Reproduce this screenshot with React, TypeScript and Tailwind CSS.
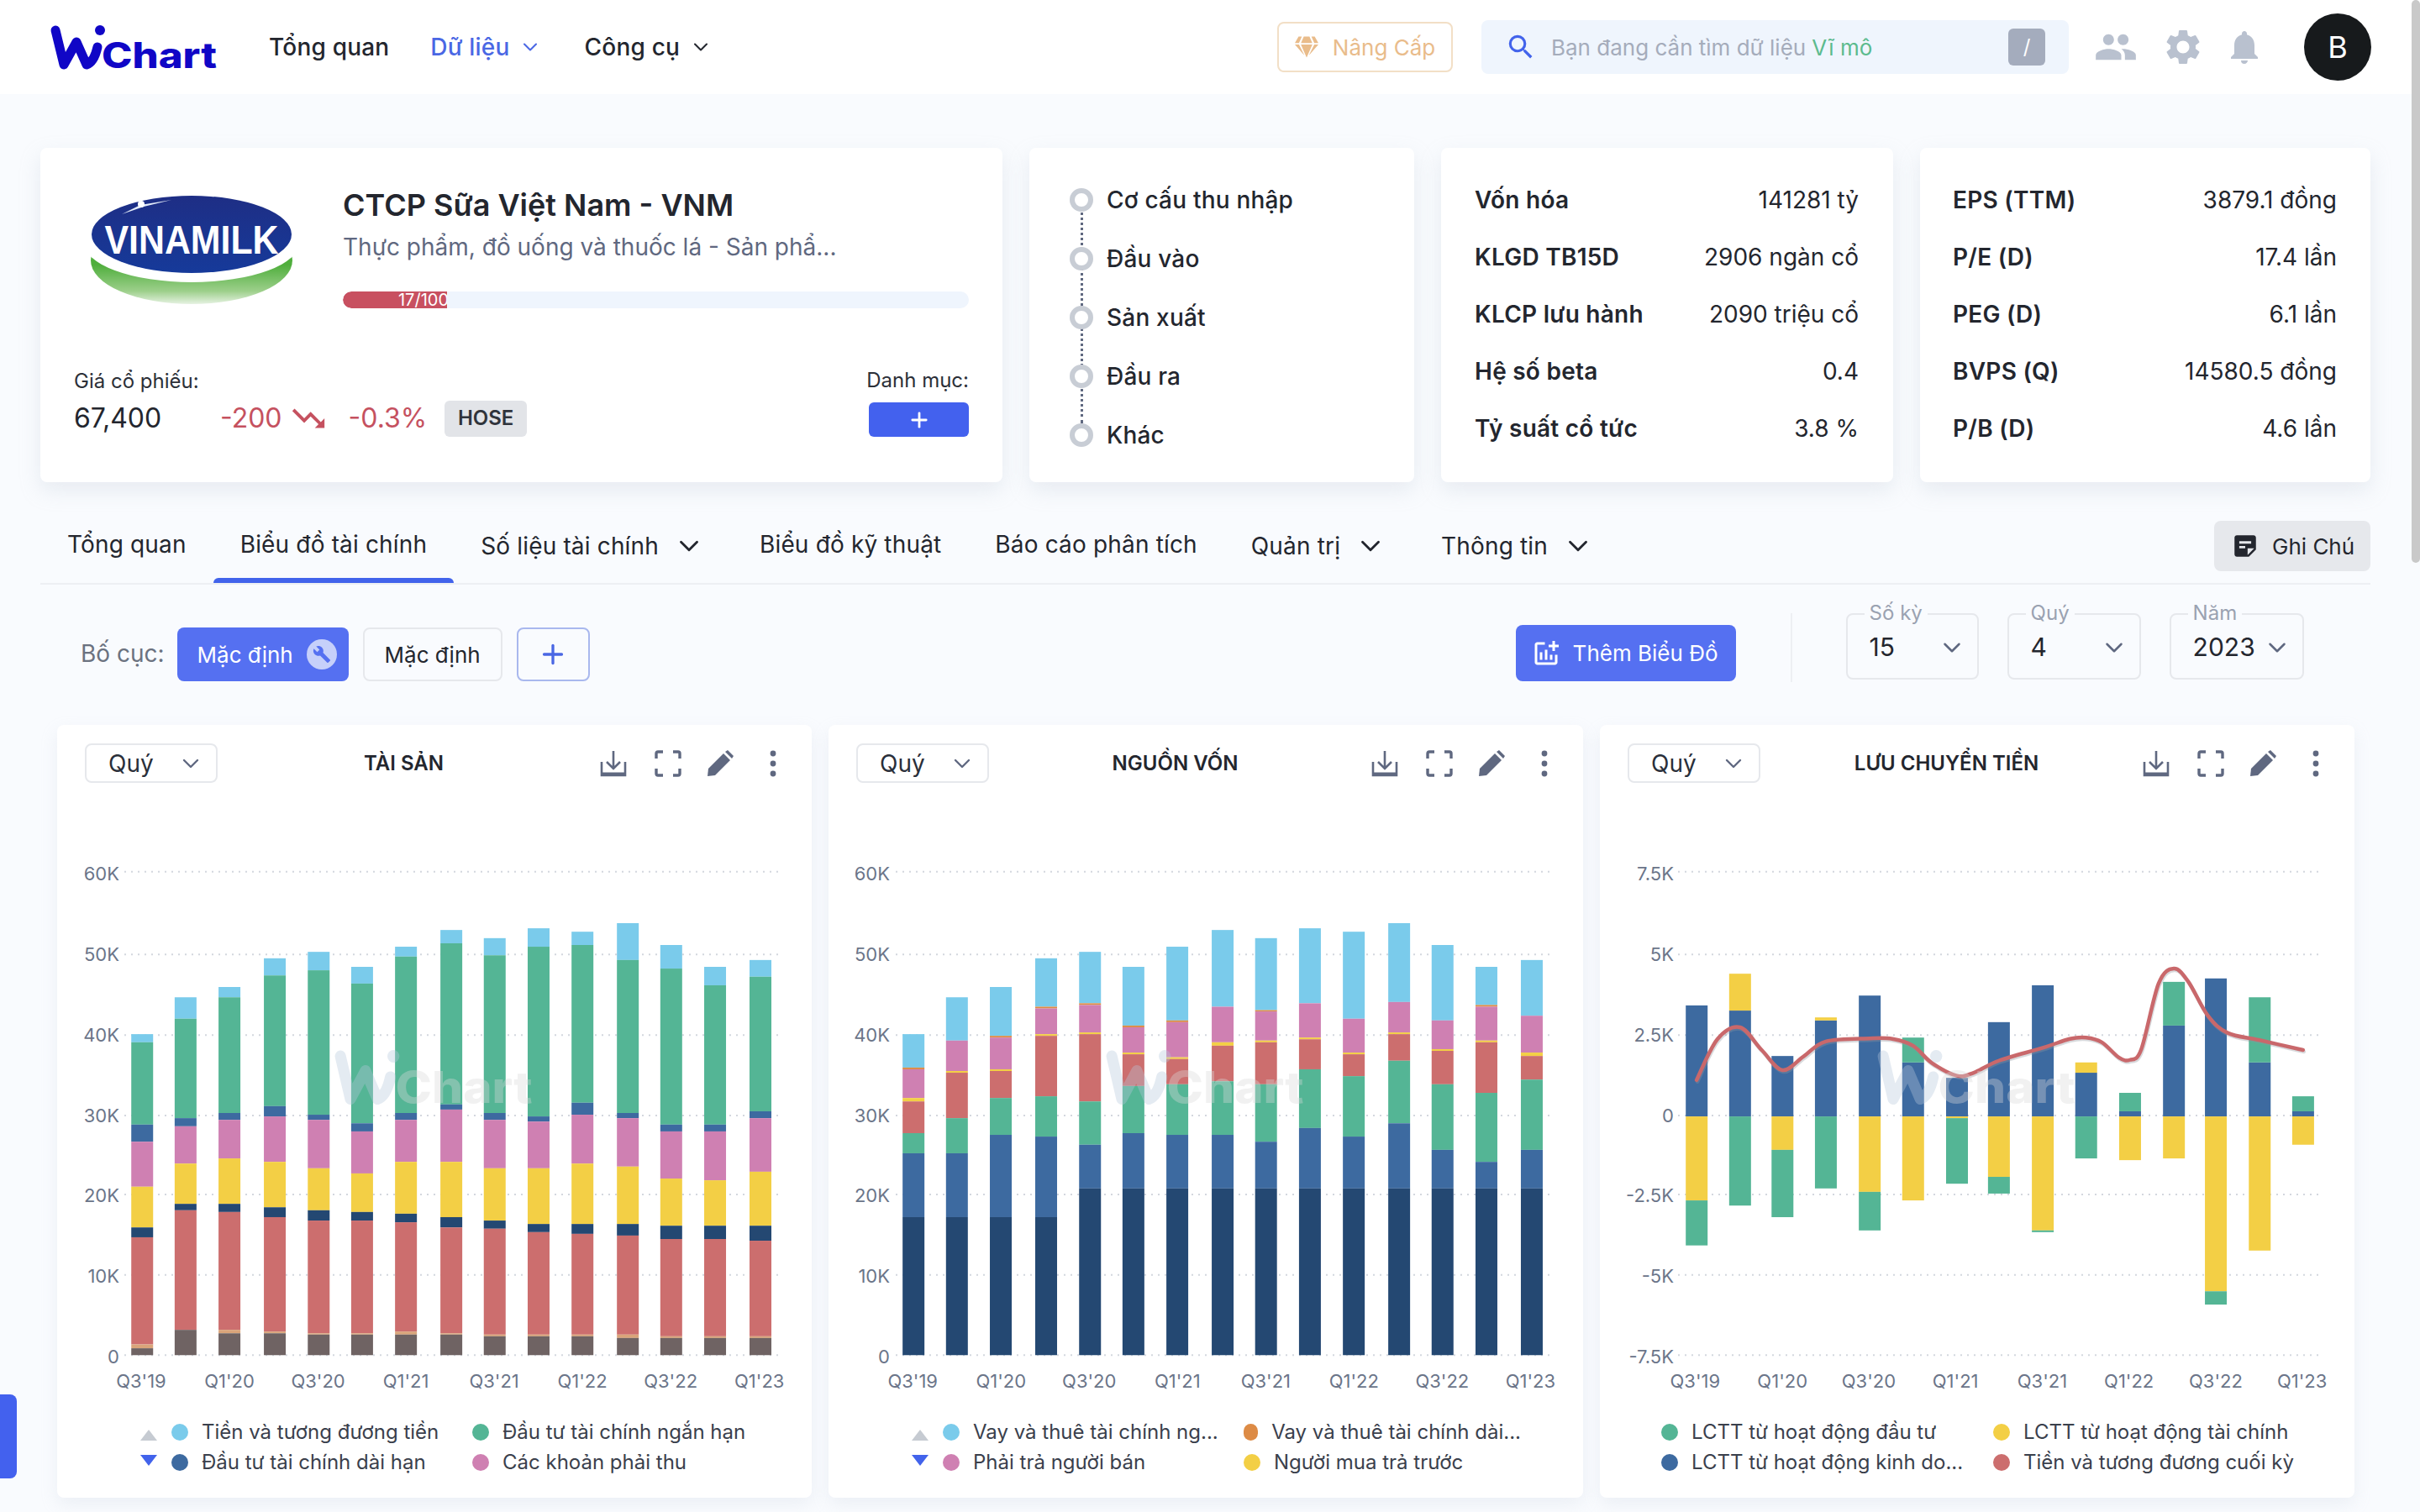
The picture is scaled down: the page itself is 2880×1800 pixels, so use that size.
import React from "react";
import { ChevronDown, Plus } from "lucide-react";
import { MdPeople, MdSettings, MdNotifications, MdBuild, MdTrendingDown, MdStickyNote2, MdOutlineAddchart, MdOutlineSearch } from "react-icons/md";
import { FaGem } from "react-icons/fa";

const SX = 1.7043;
const SY = 1.96;
const SVG_TOP = 1010;

const barXs = [164, 252, 341, 433, 522, 610, 699, 791, 879, 968, 1057, 1149, 1237, 1326, 1418];

const c1Colors = ["#7ACBEB", "#54B595", "#3D6AA0", "#CF80B2", "#F3CF45", "#244872", "#CC6E6E", "#D9A47A", "#6F6363"];
const c1 = [
  [453, 472, 664, 704, 809, 904, 927, 1177, 1186],
  [367, 417, 649, 668, 755, 849, 864, 1143, 1143],
  [343, 367, 637, 653, 743, 849, 868, 1143, 1151],
  [276, 316, 621, 645, 751, 857, 880, 1147, 1151],
  [261, 304, 641, 653, 766, 864, 888, 1151, 1154],
  [296, 335, 661, 680, 778, 868, 888, 1151, 1154],
  [249, 272, 637, 653, 751, 872, 892, 1147, 1154],
  [210, 241, 617, 629, 751, 880, 904, 1151, 1154],
  [229, 269, 637, 653, 766, 888, 907, 1154, 1158],
  [206, 249, 645, 657, 766, 896, 915, 1154, 1158],
  [214, 245, 613, 641, 755, 896, 919, 1154, 1158],
  [194, 280, 637, 649, 762, 896, 923, 1154, 1162],
  [245, 300, 664, 680, 790, 900, 931, 1158, 1162],
  [296, 339, 664, 680, 794, 900, 931, 1158, 1162],
  [280, 319, 633, 649, 774, 900, 935, 1158, 1162],
];

const c2Colors = ["#7ACBEB", "#DD8B45", "#CF80B2", "#F3CF45", "#CC6E6E", "#54B595", "#3D6AA0", "#244872"];
const c2 = [
  [453, 531, 535, 602, 610, 684, 731, 880],
  [367, 468, 468, 539, 543, 649, 731, 880],
  [343, 457, 461, 535, 539, 602, 688, 880],
  [276, 389, 393, 453, 457, 598, 692, 880],
  [261, 381, 385, 449, 453, 610, 711, 813],
  [296, 433, 437, 496, 500, 574, 684, 813],
  [249, 421, 425, 507, 511, 570, 688, 813],
  [210, 389, 389, 472, 480, 563, 688, 813],
  [229, 397, 400, 468, 472, 570, 704, 813],
  [206, 381, 381, 461, 465, 535, 672, 813],
  [214, 417, 417, 496, 500, 551, 692, 813],
  [194, 378, 378, 449, 453, 515, 661, 813],
  [245, 421, 421, 488, 492, 570, 723, 813],
  [296, 385, 389, 468, 472, 590, 751, 813],
  [280, 410, 410, 496, 504, 559, 723, 813],
];

const B = "#3D6AA0";
const G = "#54B595";
const Y = "#F3CF45";
const c3Xs = [181, 269, 355, 443, 532, 620, 709, 794, 883, 971, 1060, 1149, 1234, 1323, 1411];
type Seg = [string, number];
const c3: { pos: Seg[]; neg: Seg[] }[] = [
  { pos: [[B, 386]], neg: [[Y, 841], [G, 946]] },
  { pos: [[B, 398], [Y, 312]], neg: [[G, 853]] },
  { pos: [[B, 504]], neg: [[Y, 723], [G, 880]] },
  { pos: [[B, 421], [Y, 414]], neg: [[G, 813]] },
  { pos: [[B, 363]], neg: [[Y, 821], [G, 911]] },
  { pos: [[B, 519], [G, 461]], neg: [[Y, 841]] },
  { pos: [[B, 555]], neg: [[Y, 649], [G, 802]] },
  { pos: [[B, 425]], neg: [[Y, 786], [G, 825]] },
  { pos: [[B, 339]], neg: [[Y, 911], [G, 915]] },
  { pos: [[B, 543], [Y, 519]], neg: [[G, 743]] },
  { pos: [[B, 633], [G, 590]], neg: [[Y, 747]] },
  { pos: [[B, 433], [G, 331]], neg: [[Y, 743]] },
  { pos: [[B, 323]], neg: [[Y, 1053], [G, 1084]] },
  { pos: [[B, 519], [G, 367]], neg: [[Y, 958]] },
  { pos: [[B, 633], [G, 598]], neg: [[Y, 711]] },
];
const linePts: [number, number][] = [
  [203, 560], [245, 465], [291, 437], [335, 490], [377, 537], [420, 505], [465, 470], [554, 463], [600, 464], [642, 480],
  [680, 520], [731, 550], [765, 543], [816, 515], [905, 485], [960, 464], [993, 461], [1025, 472], [1060, 508], [1082, 513],
  [1105, 488], [1140, 335], [1171, 300], [1200, 330], [1240, 410], [1280, 450], [1345, 467], [1433, 490],
];

const gridZ = [74, 267, 455, 643, 827, 1015, 1202];
const xLabels = ["Q3'19", "Q1'20", "Q3'20", "Q1'21", "Q3'21", "Q1'22", "Q3'22", "Q1'23"];

function LogoMark({ wColor, textColor }: { wColor: string; textColor: string }) {
  return (
    <g>
      <path d="M66 36 L76 77 L91 50 L103 77 Q112 74 116 56" fill="none" stroke={wColor} strokeWidth="11" strokeLinecap="round" strokeLinejoin="round" />
      <circle cx="119" cy="36" r="6" fill={wColor} />
      <text x="121" y="81" fontSize="42" fontWeight="800" fill={textColor} textLength="137" lengthAdjust="spacingAndGlyphs">Chart</text>
    </g>
  );
}

function Chart({ kind, ox, left, labelRight, gridL, gridR, yLabels }: {
  kind: 1 | 2 | 3; ox: number; left: number; labelRight: number; gridL: number; gridR: number; yLabels: string[];
}) {
  const sx = (z: number) => ox + z / SX - left;
  const sy = (z: number) => 1000 + z / SY - SVG_TOP;
  const rects: React.ReactNode[] = [];
  const addRect = (k: string, zx: number, zt: number, zb: number, col: string) => {
    if (zb <= zt) return;
    rects.push(<rect key={k} x={sx(zx)} y={sy(zt)} width={26} height={(zb - zt) / SY} fill={col} />);
  };
  if (kind === 1 || kind === 2) {
    const data = kind === 1 ? c1 : c2;
    const cols = kind === 1 ? c1Colors : c2Colors;
    const off = kind === 1 ? 0 : -3.5;
    data.forEach((b, i) => {
      const arr = [...b, 1202];
      for (let s = 0; s < arr.length - 1; s++) addRect(`${i}-${s}`, barXs[i] + off, arr[s], arr[s + 1], cols[s]);
    });
  } else {
    c3.forEach((b, i) => {
      let cur = 645;
      b.pos.forEach(([col, top], s) => { addRect(`p${i}-${s}`, c3Xs[i], top, cur, col); cur = top; });
      cur = 645;
      b.neg.forEach(([col, bot], s) => { addRect(`n${i}-${s}`, c3Xs[i], cur, bot, col); cur = bot; });
    });
  }
  let linePath = "";
  if (kind === 3) {
    const P = linePts.map(([x, y]) => [sx(x), sy(y)]);
    linePath = `M${P[0][0]} ${P[0][1]}`;
    for (let i = 0; i < P.length - 1; i++) {
      const p0 = P[Math.max(0, i - 1)], p1 = P[i], p2 = P[i + 1], p3 = P[Math.min(P.length - 1, i + 2)];
      const c1x = p1[0] + (p2[0] - p0[0]) / 6, c1y = p1[1] + (p2[1] - p0[1]) / 6;
      const c2x = p2[0] - (p3[0] - p1[0]) / 6, c2y = p2[1] - (p3[1] - p1[1]) / 6;
      linePath += ` C${c1x} ${c1y} ${c2x} ${c2y} ${p2[0]} ${p2[1]}`;
    }
  }
  const labelCenters = kind === 1
    ? [184, 363, 543, 721, 900, 1079, 1258, 1438]
    : kind === 2
      ? [181, 360, 539, 718, 897, 1076, 1255, 1434]
      : [200, 377, 552, 728, 904, 1080, 1256, 1431];
  return (
    <svg width={898} height={650} className="block">
      {gridZ.map((z) => (
        <line key={z} x1={gridL - left} x2={gridR - left} y1={sy(z)} y2={sy(z)} stroke="#D3D7DE" strokeWidth={2} strokeDasharray="2 6" />
      ))}
      {rects}
      {kind === 3 && (
        <>
          <path d={linePath} fill="none" stroke="#8F959E" strokeOpacity={0.35} strokeWidth={4.5} transform="translate(1 2)" strokeLinecap="round" />
          <path d={linePath} fill="none" stroke="#C9686B" strokeWidth={4.5} strokeLinecap="round" />
        </>
      )}
      <g transform="translate(330 240) scale(1.19 1.24) translate(-60 -30)" opacity={0.36}>
        <LogoMark wColor="#B6C8DC" textColor="#DADADA" />
      </g>
      {yLabels.map((t, i) => (
        <text key={t} x={labelRight - left} y={sy(74 + i * 188) + 10} textAnchor="end" fontSize={22} fill="#6B7589">{t}</text>
      ))}
      {xLabels.map((t, i) => (
        <text key={t} x={sx(labelCenters[i])} y={sy(1262) + 8} textAnchor="middle" fontSize={22} fill="#6B7589">{t}</text>
      ))}
    </svg>
  );
}

function QuySelect() {
  return (
    <div className="ml-[33px] flex h-[47px] w-[158px] items-center justify-between rounded-[8px] border-2 border-[#E6E8EC] bg-white pl-[26px] pr-[14px] text-[28px] text-[#2A2F3A]">
      <span>Quý</span>
      <ChevronDown size={32} strokeWidth={1.8} className="text-[#5F6880]" />
    </div>
  );
}

function HeaderIcons() {
  const c = "#5F6880";
  return (
    <div className="flex items-center">
      <svg width="32" height="32" viewBox="0 0 32 32" fill="none" stroke={c}>
        <path d="M16 1 V21 M8 14 L16 22 L24 14" strokeWidth="2.6" />
        <path d="M2 14 V30 H30 V14" strokeWidth="2.6" />
        <path d="M2 28.5 H30" strokeWidth="4" />
      </svg>
      <svg className="ml-[33px]" width="32" height="32" viewBox="0 0 32 32" fill="none" stroke={c} strokeWidth="3.4">
        <path d="M2 10 V4 Q2 2 4 2 H10 M22 2 H28 Q30 2 30 4 V10 M30 22 V28 Q30 30 28 30 H22 M10 30 H4 Q2 30 2 28 V22" />
      </svg>
      <svg className="ml-[30px]" width="32" height="32" viewBox="0 0 32 32" fill={c}>
        <path d="M1 31 L2 22 L20 4 L28 12 L10 30 Z" />
        <path d="M22 2 L25 0 L32 7 L30 10 Z" />
      </svg>
      <svg className="ml-[31px]" width="32" height="32" viewBox="0 0 32 32" fill={c}>
        <circle cx="16" cy="4" r="3.4" /><circle cx="16" cy="16" r="3.4" /><circle cx="16" cy="28" r="3.4" />
      </svg>
    </div>
  );
}

type LegendItem = [string, string];
function Legend({ items, arrows }: { items: LegendItem[]; arrows: boolean }) {
  return (
    <div className={arrows ? "mt-[27px] flex pl-[99px]" : "mt-[27px] flex pl-[73px]"}>
      {arrows && (
        <div className="mr-[17px] flex w-[20px] flex-col">
          <div className="flex h-[36px] items-end pb-[8px]">
            <svg width="20" height="13" viewBox="0 0 20 13"><path d="M10 0 L20 13 H0 Z" fill="#C6CBD2" /></svg>
          </div>
          <div className="flex h-[36px] items-start pt-[9px]">
            <svg width="20" height="13" viewBox="0 0 20 13"><path d="M0 0 H20 L10 13 Z" fill="#4263EB" /></svg>
          </div>
        </div>
      )}
      <div className={arrows ? "grid grid-cols-[358px_330px] text-[24px] text-[#3A404C]" : "grid grid-cols-[395px_400px] text-[24px] text-[#3A404C]"}>
        {items.map(([t, col]) => (
          <div key={t} className="flex h-[36px] items-center whitespace-nowrap">
            <span className="mr-[16px] h-[20px] w-[20px] rounded-full" style={{ backgroundColor: col }} />
            {t}
          </div>
        ))}
      </div>
    </div>
  );
}

function ChartCard(props: { title: string; kind: 1 | 2 | 3; ox: number; left: number; labelRight: number; gridL: number; gridR: number; yLabels: string[]; legend: LegendItem[]; arrows: boolean }) {
  return (
    <div className="h-[920px] w-[898px] rounded-[8px] bg-white pt-[22px] shadow-[0_8px_20px_rgba(180,190,205,0.18)]">
      <div className="flex h-[47px] items-center">
        <QuySelect />
        <div className="w-[455px] pr-[12px] text-center text-[24px] font-semibold text-[#23262E]">{props.title}</div>
        <HeaderIcons />
      </div>
      <div className="mt-[78px]">
        <Chart kind={props.kind} ox={props.ox} left={props.left} labelRight={props.labelRight} gridL={props.gridL} gridR={props.gridR} yLabels={props.yLabels} />
      </div>
      <Legend items={props.legend} arrows={props.arrows} />
    </div>
  );
}

function Row({ label, value }: { label: string; value: string }) {
  return (
    <div className="flex h-[68px] items-center justify-between text-[28px] text-[#23262E]">
      <span className="font-semibold tracking-[0.25px]">{label}</span>
      <span>{value}</span>
    </div>
  );
}

function TabChevron() {
  return (
    <span className="ml-[16px] flex w-[40px] justify-center text-[#23262E]">
      <ChevronDown size={38} strokeWidth={1.8} className="shrink-0" />
    </span>
  );
}

function PeriodSelect({ label, value, w }: { label: string; value: string; w: string }) {
  return (
    <div className={`relative flex h-[79px] items-center justify-between rounded-[8px] border-2 border-[#E6E8EC] pl-[26px] pr-[13px] pt-[2px] ${w}`}>
      <span className="absolute left-[20px] top-[-18px] bg-[#F9FBFE] px-[6px] text-[24px] leading-[32px] text-[#9AA2B1]">{label}</span>
      <span className="text-[30px] text-[#23262E]">{value}</span>
      <ChevronDown size={34} strokeWidth={1.8} className="text-[#5F6880]" />
    </div>
  );
}

export default function App() {
  return (
    <div className="relative h-[1800px] w-[2880px] overflow-hidden bg-[#F9FBFE] text-[#23262E] [font-family:Inter,'Noto_Sans',sans-serif]">
      {/* Top bar */}
      <header className="flex h-[112px] items-center bg-white pl-[60px] pr-[58px]">
        <svg width="198" height="53" viewBox="60 30 198 53" className="overflow-visible">
          <LogoMark wColor="#1006C6" textColor="#1006C6" />
        </svg>
        <span className="ml-[62px] text-[28px] font-medium tracking-[0.2px] text-[#23262E]">Tổng quan</span>
        <span className="ml-[49px] text-[28px] font-medium tracking-[0.2px] text-[#4A67E4]">Dữ liệu</span>
        <ChevronDown size={28} strokeWidth={1.8} className="ml-[10px] text-[#4A67E4]" />
        <span className="ml-[51px] text-[28px] font-medium tracking-[0.2px] text-[#23262E]">Công cụ</span>
        <ChevronDown size={28} strokeWidth={1.8} className="ml-[11px] text-[#23262E]" />
        <div className="ml-auto flex h-[60px] w-[209px] items-center justify-center rounded-[8px] border-2 border-[#F2DFC6] text-[26px] text-[#E9BC8B]">
          <FaGem size={28} className="mr-[17px]" />
          Nâng Cấp
        </div>
        <div className="ml-[34px] flex h-[64px] w-[699px] items-center rounded-[8px] bg-[#EFF5FD] pl-[28px] text-[26px] text-[#A5ACBB]">
          <MdOutlineSearch size={38} className="text-[#4263EB]" />
          <span className="ml-[17px]">Bạn đang cần tìm dữ liệu</span>
          <span className="ml-[7px] text-[#5CBB8E]">Vĩ mô</span>
          <span className="ml-auto mr-[28px] flex h-[44px] w-[44px] items-center justify-center rounded-[6px] bg-[#A4ACBD] text-[24px] text-white">/</span>
        </div>
        <MdPeople size={52} className="ml-[30px] text-[#B9C1CF]" />
        <MdSettings size={50} className="ml-[29px] text-[#B9C1CF]" />
        <MdNotifications size={48} className="ml-[24px] text-[#B9C1CF]" />
        <div className="ml-[47px] flex h-[80px] w-[80px] items-center justify-center rounded-full bg-[#171A1C] text-[36px] text-white">B</div>
      </header>

      {/* Summary cards */}
      <section className="mt-[64px] flex gap-[32px] pl-[48px]">
        <div className="flex h-[398px] w-[1145px] flex-col justify-between rounded-[8px] bg-white pb-[54px] pl-[40px] pr-[40px] shadow-[0_10px_24px_rgba(180,190,205,0.25)]">
          <div className="flex pt-[56px]">
            <svg width="258" height="130" viewBox="0 0 258 130" className="ml-[11px]">
              <defs>
                <linearGradient id="vg" x1="0" y1="0" x2="0" y2="1">
                  <stop offset="0.55" stopColor="#4FAE3C" />
                  <stop offset="0.85" stopColor="#9CCF8A" />
                  <stop offset="1" stopColor="#E6F2E2" />
                </linearGradient>
                <linearGradient id="vb" x1="0" y1="0" x2="0" y2="1">
                  <stop offset="0" stopColor="#1E2E85" />
                  <stop offset="1" stopColor="#163A9A" />
                </linearGradient>
              </defs>
              <ellipse cx="129" cy="78" rx="120" ry="52" fill="url(#vg)" />
              <ellipse cx="129" cy="56" rx="129" ry="48" fill="#FFFFFF" />
              <ellipse cx="129" cy="47" rx="119" ry="46" fill="url(#vb)" />
              <path d="M46 23 L68 12 L105 6 L72 14 Z" fill="#E4ECF9" />
              <circle cx="69" cy="11" r="4" fill="#FFFFFF" />
              <text x="129" y="70" textAnchor="middle" fontSize="48" fontWeight="700" fill="#FFFFFF" textLength="207" lengthAdjust="spacingAndGlyphs" className="[font-family:'Liberation_Sans',sans-serif]">VINAMILK</text>
            </svg>
            <div className="ml-[51px] flex-1">
              <div className="mt-[-10px] text-[36px] font-semibold leading-[44px] text-[#23262E]">CTCP Sữa Việt Nam - VNM</div>
              <div className="mt-[8px] text-[28px] leading-[40px] text-[#5F6880]">Thực phẩm, đồ uống và thuốc lá - Sản phẩ...</div>
              <div className="mt-[33px] h-[20px] overflow-hidden rounded-full bg-[#EFF5FD]">
                <div className="flex h-[20px] w-[124px] justify-end overflow-hidden whitespace-nowrap rounded-l-full bg-[#C85060] text-[20px] leading-[20px] text-white">
                  <span className="mr-[-2px]">17/100</span>
                </div>
              </div>
            </div>
          </div>
          <div className="flex items-end justify-between">
            <div>
              <div className="text-[24px] leading-[32px] text-[#2C3038]">Giá cổ phiếu:</div>
              <div className="mt-[6px] flex h-[44px] items-center">
                <span className="w-[174px] text-[32px] text-[#23262E]">67,400</span>
                <span className="text-[32px] text-[#C5515F]">-200</span>
                <MdTrendingDown size={46} className="ml-[8px] text-[#C5515F]" />
                <span className="ml-[25px] text-[32px] text-[#C5515F]">-0.3%</span>
                <span className="ml-[21px] flex h-[43px] w-[98px] items-center justify-center rounded-[6px] bg-[#E2E4E8] text-[24px] font-semibold text-[#30343C]">HOSE</span>
              </div>
            </div>
            <div className="flex w-[119px] flex-col items-end">
              <div className="whitespace-nowrap text-[24px] leading-[32px] text-[#2C3038]">Danh mục:</div>
              <div className="mt-[10px] flex h-[41px] w-[119px] items-center justify-center rounded-[6px] bg-[#4361EE] text-white">
                <Plus size={28} strokeWidth={2.4} />
              </div>
            </div>
          </div>
        </div>

        <div className="relative h-[398px] w-[458px] rounded-[8px] bg-white pl-[48px] pt-[27px] shadow-[0_10px_24px_rgba(180,190,205,0.25)]">
          <div className="absolute bottom-[70px] left-[61px] top-[70px] w-0 border-l-[3px] border-dotted border-[#5F6880]" />
          {["Cơ cấu thu nhập", "Đầu vào", "Sản xuất", "Đầu ra", "Khác"].map((t) => (
            <div key={t} className="relative flex h-[70px] items-center text-[28px] font-medium tracking-[0.2px] text-[#23262E]">
              <span className="h-[28px] w-[28px] rounded-full border-[6px] border-[#C8CDD5] bg-white" />
              <span className="ml-[16px]">{t}</span>
            </div>
          ))}
        </div>

        <div className="h-[398px] w-[538px] rounded-[8px] bg-white pl-[40px] pr-[41px] pt-[28px] shadow-[0_10px_24px_rgba(180,190,205,0.25)]">
          <Row label="Vốn hóa" value="141281 tỷ" />
          <Row label="KLGD TB15D" value="2906 ngàn cổ" />
          <Row label="KLCP lưu hành" value="2090 triệu cổ" />
          <Row label="Hệ số beta" value="0.4" />
          <Row label="Tỷ suất cổ tức" value="3.8 %" />
        </div>

        <div className="h-[398px] w-[536px] rounded-[8px] bg-white pl-[39px] pr-[40px] pt-[28px] shadow-[0_10px_24px_rgba(180,190,205,0.25)]">
          <Row label="EPS (TTM)" value="3879.1 đồng" />
          <Row label="P/E (D)" value="17.4 lần" />
          <Row label="PEG (D)" value="6.1 lần" />
          <Row label="BVPS (Q)" value="14580.5 đồng" />
          <Row label="P/B (D)" value="4.6 lần" />
        </div>
      </section>

      {/* Tabs */}
      <nav className="ml-[48px] mt-[32px] flex h-[90px] w-[2773px] items-stretch border-b-2 border-[#EDEFF3] text-[28px] tracking-[0.16px] text-[#23262E]">
        <div className="flex items-center px-[32px] pb-[4px]">Tổng quan</div>
        <div className="relative flex items-center px-[32px] pb-[4px]">
          Biểu đồ tài chính
          <span className="absolute bottom-0 left-0 right-0 h-[6px] rounded-t-[6px] bg-[#4263EB]" />
        </div>
        <div className="flex items-center pl-[32px] pr-[32px]">Số liệu tài chính<TabChevron /></div>
        <div className="flex items-center px-[32px] pb-[4px]">Biểu đồ kỹ thuật</div>
        <div className="flex items-center px-[32px] pb-[4px]">Báo cáo phân tích</div>
        <div className="flex items-center px-[32px]">Quản trị<TabChevron /></div>
        <div className="flex items-center px-[32px]">Thông tin<TabChevron /></div>
        <div className="ml-auto mt-[14px] flex h-[60px] w-[186px] items-center rounded-[8px] bg-[#E6E8EC] pl-[20px]">
          <MdStickyNote2 size={34} className="text-[#23262E]" />
          <span className="ml-[15px] text-[26px] tracking-normal">Ghi Chú</span>
        </div>
      </nav>

      {/* Toolbar */}
      <section className="mt-[34px] flex h-[81px] items-start pl-[96px]">
        <span className="mt-[30px] text-[28px] leading-[36px] text-[#6B7280]">Bố cục:</span>
        <div className="ml-[15px] mt-[17px] flex h-[64px] w-[204px] items-center rounded-[8px] bg-[#5570F1] pl-[24px] text-[26px] text-white">
          Mặc định
          <span className="ml-[16px] flex h-[36px] w-[36px] items-center justify-center rounded-full bg-[#C6D0FA] text-[#5570F1]">
            <MdBuild size={22} />
          </span>
        </div>
        <div className="ml-[17px] mt-[17px] flex h-[64px] w-[166px] items-center justify-center rounded-[8px] border-2 border-[#E6E8EC] text-[26px]">Mặc định</div>
        <div className="ml-[17px] mt-[17px] flex h-[64px] w-[87px] items-center justify-center rounded-[8px] border-2 border-[#A9B8EE] text-[#4A67E4]">
          <Plus size={36} strokeWidth={2.2} />
        </div>
        <div className="ml-[1102px] mt-[14px] flex h-[67px] w-[262px] items-center rounded-[8px] bg-[#5570F1] pl-[18px] text-[26px] text-white">
          <MdOutlineAddchart size={36} />
          <span className="ml-[14px]">Thêm Biểu Đồ</span>
        </div>
        <div className="ml-[65px] h-[82px] w-[2px] bg-[#EDEFF3]" />
        <div className="ml-[64px] flex gap-[34px]">
          <PeriodSelect label="Số kỳ" value="15" w="w-[158px]" />
          <PeriodSelect label="Quý" value="4" w="w-[159px]" />
          <PeriodSelect label="Năm" value="2023" w="w-[160px]" />
        </div>
      </section>

      {/* Charts */}
      <section className="ml-[68px] mt-[52px] flex gap-[20px]">
        <ChartCard
          title="TÀI SẢN" kind={1} ox={60} left={68} labelRight={142} gridL={148} gridR={928}
          yLabels={["60K", "50K", "40K", "30K", "20K", "10K", "0"]}
          legend={[["Tiền và tương đương tiền", "#7ACBEB"], ["Đầu tư tài chính ngắn hạn", "#54B595"], ["Đầu tư tài chính dài hạn", "#3D6AA0"], ["Các khoản phải thu", "#CF80B2"]]}
          arrows
        />
        <ChartCard
          title="NGUỒN VỐN" kind={2} ox={980} left={986} labelRight={1059} gridL={1066} gridR={1847}
          yLabels={["60K", "50K", "40K", "30K", "20K", "10K", "0"]}
          legend={[["Vay và thuê tài chính ng...", "#7ACBEB"], ["Vay và thuê tài chính dài...", "#DD8B45"], ["Phải trả người bán", "#CF80B2"], ["Người mua trả trước", "#F3CF45"]]}
          arrows
        />
        <ChartCard
          title="LƯU CHUYỂN TIỀN" kind={3} ox={1900} left={1904} labelRight={1992} gridL={1997} gridR={2763}
          yLabels={["7.5K", "5K", "2.5K", "0", "-2.5K", "-5K", "-7.5K"]}
          legend={[["LCTT từ hoạt động đầu tư", "#54B595"], ["LCTT từ hoạt động tài chính", "#F3CF45"], ["LCTT từ hoạt động kinh do...", "#3D6AA0"], ["Tiền và tương đương cuối kỳ", "#CC6E6E"]]}
          arrows={false}
        />
      </section>

      {/* Floating side tab and page scrollbar */}
      <div className="absolute left-0 top-[1660px] h-[100px] w-[20px] rounded-r-[8px] bg-[#4361EE]" />
      <div className="absolute right-0 top-0 h-[670px] w-[10px] rounded-full bg-[#C9C9C9]" />
    </div>
  );
}
